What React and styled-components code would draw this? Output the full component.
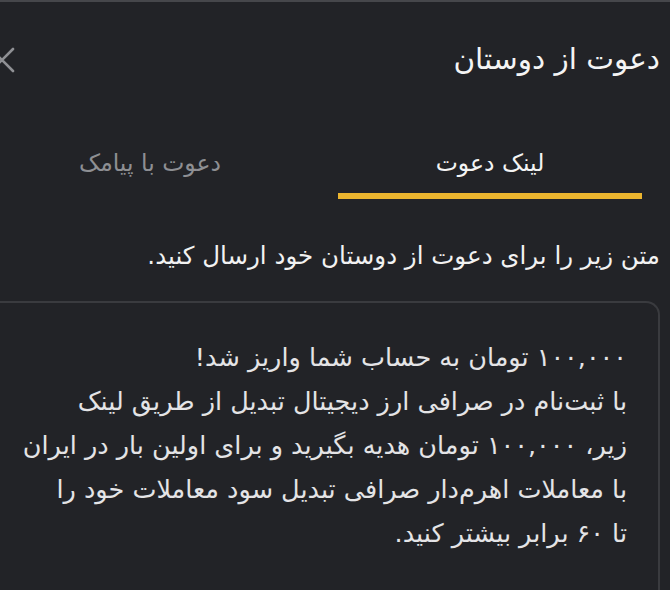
import React, { useState } from "react";
import styled, { createGlobalStyle } from "styled-components";

const GlobalStyle = createGlobalStyle`
  html, body { margin: 0; padding: 0; background: #222327; }
  body { font-family: "DejaVu Sans", "Noto Sans Arabic", sans-serif; }
  * { box-sizing: border-box; }
`;

const Page = styled.div`
  width: 670px;
  height: 590px;
  overflow: hidden;
  direction: rtl;
  background: #222327;
  border-top: 2px solid #46474b;
  display: flex;
  flex-direction: column;
`;

const Header = styled.header`
  height: 116px;
  display: flex;
  align-items: center;
  justify-content: space-between;
  padding: 0 10px 0 0;
`;

const Title = styled.h1`
  margin: 0;
  font-size: 29.5px;
  font-weight: 400;
  color: #f4f4f4;
  line-height: 1;
`;

const CloseButton = styled.button`
  background: none;
  border: none;
  padding: 0;
  margin-left: -12px;
  width: 28px;
  height: 28px;
  color: #8f9094;
  display: flex;
  align-items: center;
  justify-content: center;
`;

const Tabs = styled.div`
  display: flex;
  gap: 36px;
  padding-right: 28px;
`;

const Tab = styled.button`
  flex: 0 0 304px;
  height: 81px;
  background: none;
  border: none;
  border-bottom: 6px solid ${(p) => (p.$active ? "#ecb52f" : "transparent")};
  color: ${(p) => (p.$active ? "#f4f4f4" : "#8e8f93")};
  font-family: inherit;
  font-size: 23.5px;
  padding: 14px 0 0;
  display: flex;
  align-items: center;
  justify-content: center;
`;

const Subtitle = styled.p`
  margin: 42px 10px 0 0;
  font-size: 24.5px;
  color: #f2f2f2;
  line-height: 30px;
`;

const MessageBox = styled.div`
  margin: 30px 10px 0 -20px;
  flex: 1;
  border: 2px solid #3a3b3f;
  border-bottom: none;
  border-radius: 14px 14px 0 0;
  padding: 32px 31px 0 0;
`;

const Line = styled.div`
  white-space: nowrap;
  font-size: 25.5px;
  line-height: 44px;
  color: #e4e4e6;
`;

const lines = [
  "۱۰۰,۰۰۰ تومان به حساب شما واریز شد!",
  "با ثبت‌نام در صرافی ارز دیجیتال تبدیل از طریق لینک",
  "زیر، ۱۰۰,۰۰۰ تومان هدیه بگیرید و برای اولین بار در ایران",
  "با معاملات اهرم‌دار صرافی تبدیل سود معاملات خود را",
  "تا ۶۰ برابر بیشتر کنید.",
];

export default function App() {
  const [tab, setTab] = useState(0);
  return (
    <>
      <GlobalStyle />
      <Page>
        <Header>
          <Title>دعوت از دوستان</Title>
          <CloseButton aria-label="close">
            <svg width="28" height="28" viewBox="0 0 28 28" fill="none" stroke="currentColor" strokeWidth="2.6" strokeLinecap="round">
              <path d="M3 3 L25 25 M25 3 L3 25" />
            </svg>
          </CloseButton>
        </Header>
        <Tabs>
          <Tab $active={tab === 0} onClick={() => setTab(0)}>لینک دعوت</Tab>
          <Tab $active={tab === 1} onClick={() => setTab(1)}>دعوت با پیامک</Tab>
        </Tabs>
        <Subtitle>متن زیر را برای دعوت از دوستان خود ارسال کنید.</Subtitle>
        <MessageBox>
          {lines.map((l, i) => (
            <Line key={i}>{l}</Line>
          ))}
        </MessageBox>
      </Page>
    </>
  );
}
